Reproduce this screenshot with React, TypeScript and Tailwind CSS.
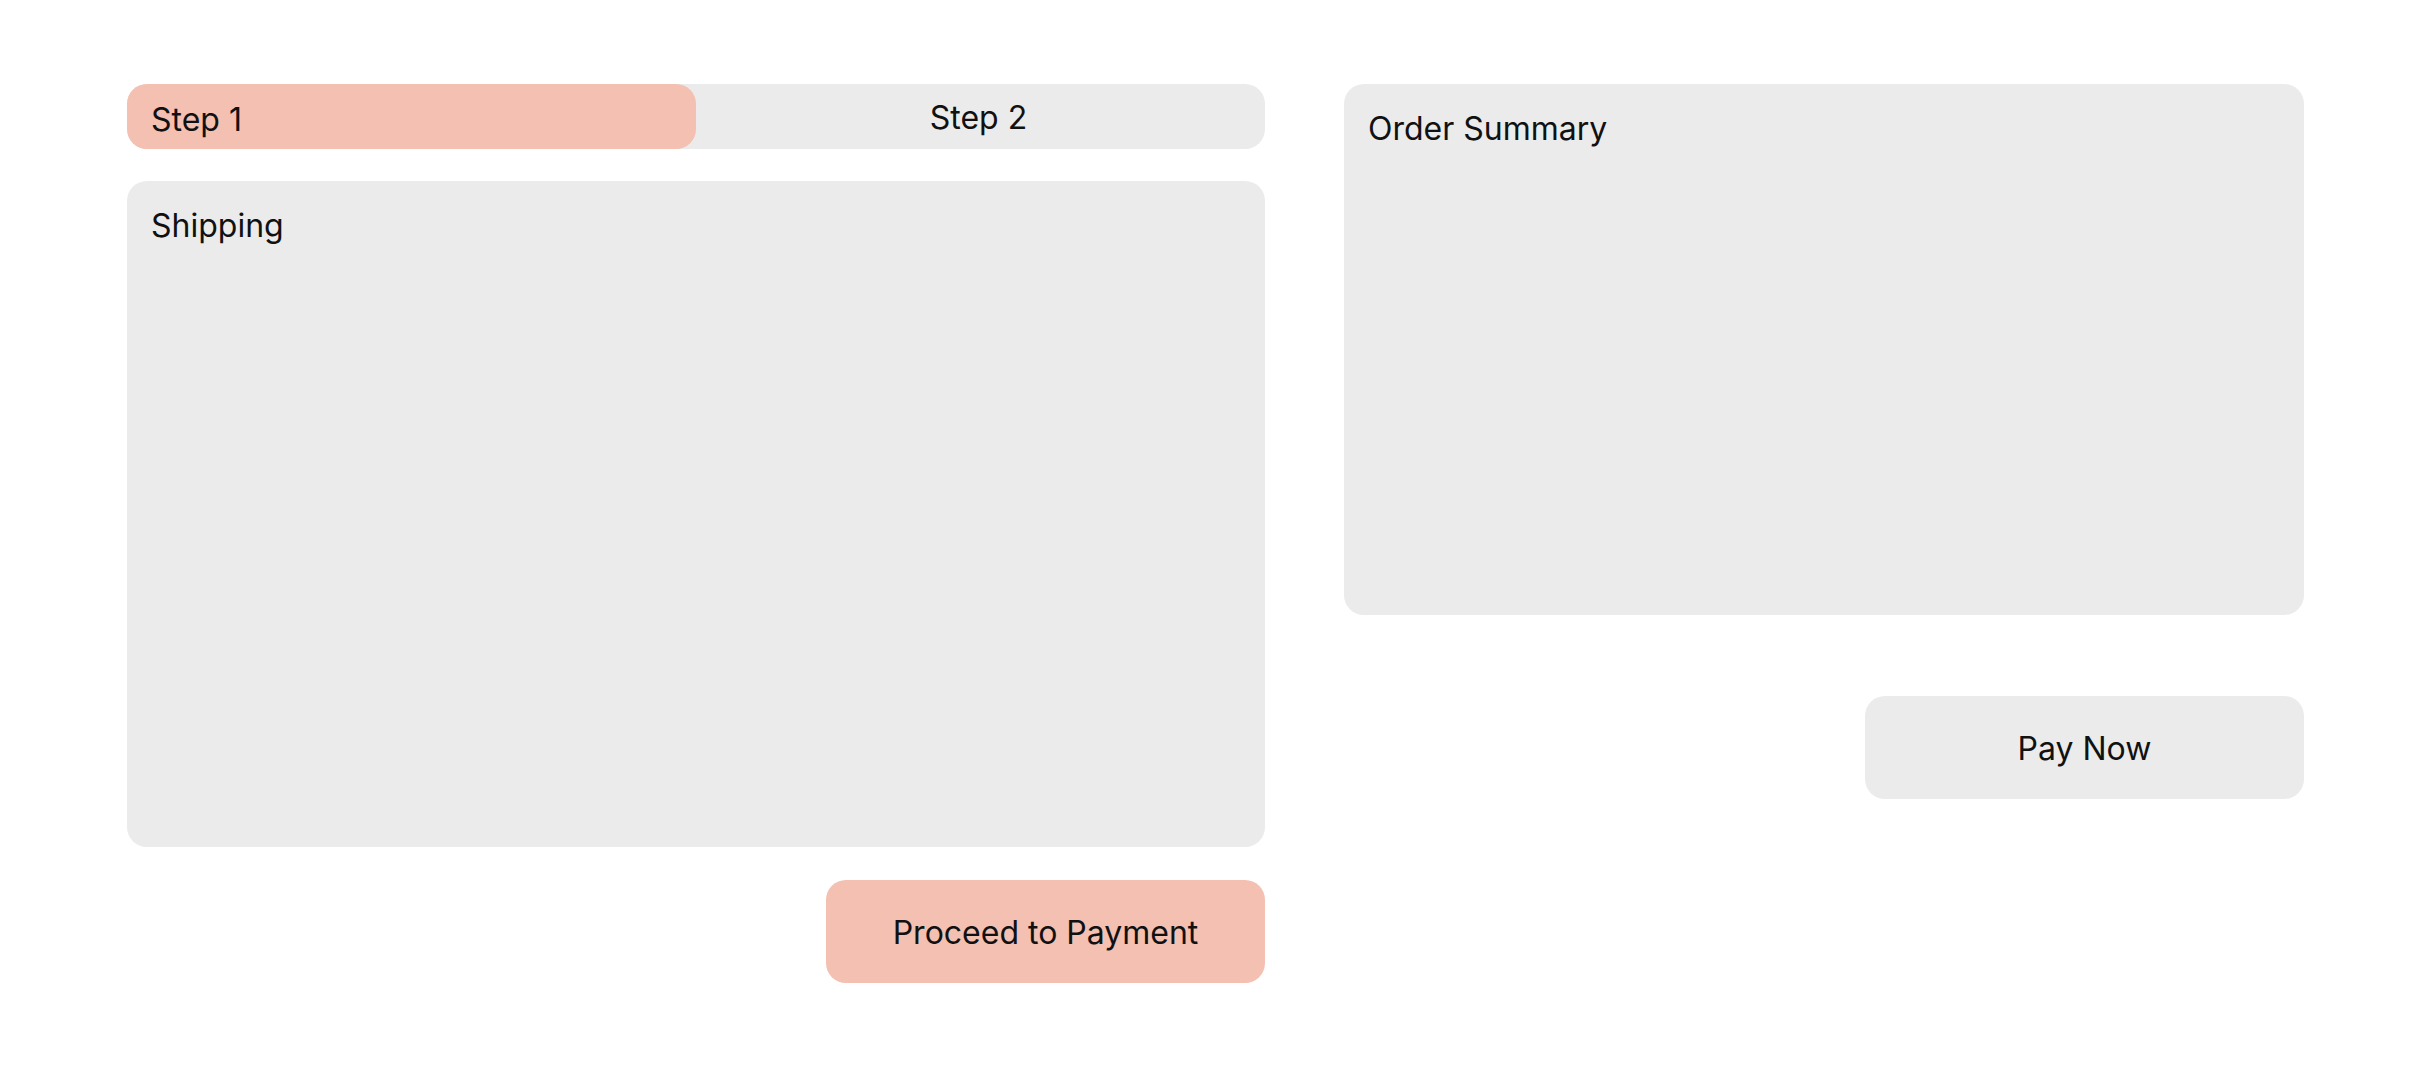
import React, { useState } from 'react';

const steps = ['Step 1', 'Step 2'];

const App: React.FC = () => {
  const [active, setActive] = useState(0);

  return (
    <div
      className="min-h-screen bg-white px-[127px] pt-[84px] text-[#111111]"
      style={{ fontFamily: 'Inter, "Noto Sans", sans-serif' }}
    >
      <div className="flex items-start gap-[79px]">
        {/* Checkout steps */}
        <div className="flex w-[1138px] flex-col">
          <div className="flex h-[65px] rounded-[20px] bg-[#ebebeb]">
            {steps.map((label, i) => (
              <button
                key={label}
                onClick={() => setActive(i)}
                className={`flex h-full w-1/2 items-center rounded-[20px] text-[32px] leading-[1.2] ${
                  i === 0 ? 'justify-start px-6 pt-[8px]' : 'justify-center pt-[3px] pr-[4px]'
                } ${active === i ? 'bg-[#f3c0b2]' : ''}`}
              >
                {label}
              </button>
            ))}
          </div>

          <div className="mt-[32px] h-[666px] rounded-[20px] bg-[#ebebeb] px-6 pt-[26px] text-[32px] leading-[1.2]">
            Shipping
          </div>

          <div className="mt-[33px] flex justify-end">
            <button className="flex h-[103px] w-[439px] items-center justify-center rounded-[20px] bg-[#f3c0b2] pt-[3px] text-[32px] leading-[1.2]">
              Proceed to Payment
            </button>
          </div>
        </div>

        {/* Summary */}
        <div className="flex flex-1 flex-col">
          <div className="h-[531px] rounded-[20px] bg-[#ebebeb] px-6 pt-[26px] text-[32px] leading-[1.2]">
            Order Summary
          </div>
          <div className="mt-[81px] flex justify-end">
            <button className="flex h-[103px] w-[439px] items-center justify-center rounded-[20px] bg-[#ebebeb] pt-[3px] text-[32px] leading-[1.2]">
              Pay Now
            </button>
          </div>
        </div>
      </div>
    </div>
  );
};

export default App;
